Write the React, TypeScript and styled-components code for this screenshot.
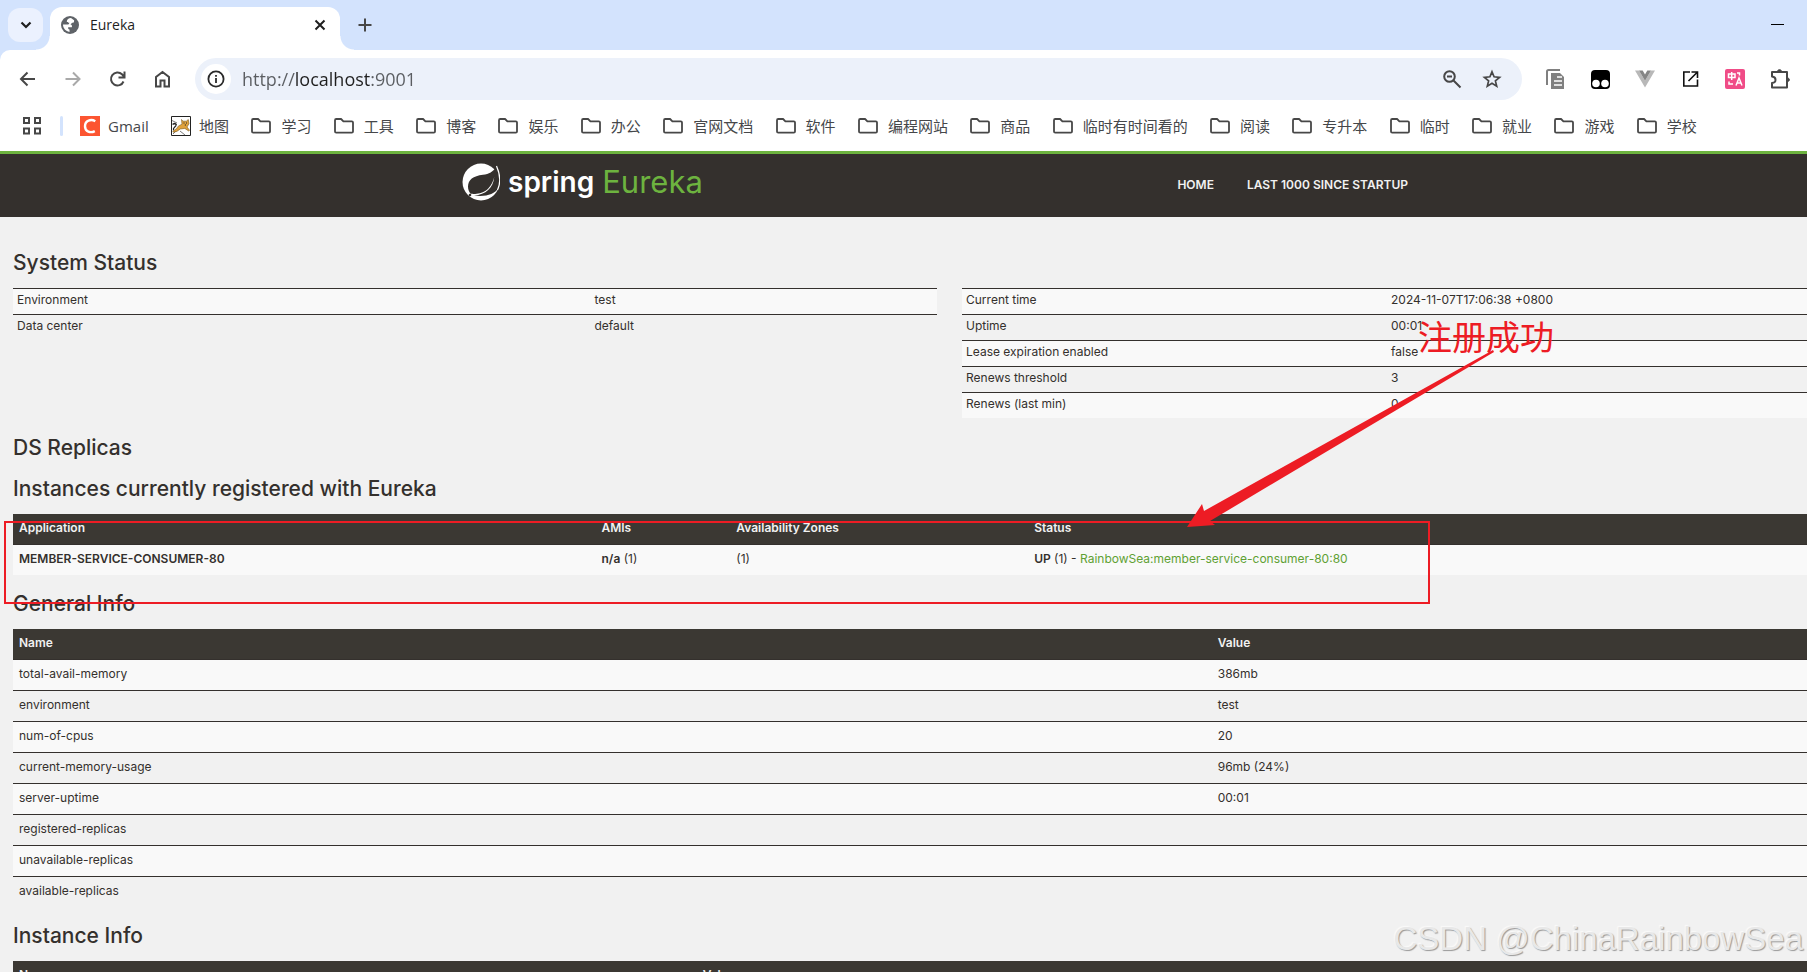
import React from "react";
import styled, { createGlobalStyle } from "styled-components";

const uiFont = '"Open Sans", "Noto Sans CJK SC", sans-serif';
const bodyFont = 'Inter, "Noto Sans CJK SC", sans-serif';
const ink = "#34302d";
const red = "#ed1c24";

const Global = createGlobalStyle`
  * { box-sizing: border-box; }
  html, body, #root { height: 100%; }
  body { margin: 0; background: #f1f1f1; font-family: ${bodyFont}; color: ${ink}; overflow: hidden; }
  button { border: 0; padding: 0; background: none; font: inherit; color: inherit; }
  a { color: inherit; text-decoration: none; }
  svg { display: block; }
`;

const Screen = styled.div`
  position: relative;
  height: 100%;
  overflow: hidden;
`;

const TabStrip = styled.header`
  display: flex;
  align-items: center;
  height: 50px;
  padding: 0 23px 0 8px;
  background: #d3e3fd;
  font-family: ${uiFont};
`;

const TabSearch = styled.button`
  display: grid;
  place-items: center;
  width: 35px;
  height: 34px;
  border-radius: 12px;
  background: #ebf1fe;
`;

const Tab = styled.div`
  position: relative;
  align-self: flex-end;
  display: flex;
  align-items: center;
  gap: 11px;
  width: 290px;
  height: 43px;
  margin-left: 7px;
  padding: 0 10px 8px 11px;
  border-radius: 12px 12px 0 0;
  background: #fff;
  font-size: 14px;
  color: #1f1f1f;
  &::before, &::after {
    content: "";
    position: absolute;
    bottom: 0;
    width: 14px;
    height: 14px;
  }
  &::before { left: -14px; background: radial-gradient(circle at 0 0, transparent 13px, #fff 14px); }
  &::after { right: -14px; background: radial-gradient(circle at 100% 0, transparent 13px, #fff 14px); }
`;

const TabTitle = styled.span`
  flex: 1;
`;

const NewTab = styled.button`
  margin-left: 15px;
`;

const Minimize = styled.button`
  margin-left: auto;
`;

const ToolbarBacking = styled.div`
  background: #d3e3fd;
`;

const Toolbar = styled.div`
  display: flex;
  align-items: center;
  padding: 8px 17px 0 18px;
  border-top-left-radius: 10px;
  background: #fff;
  font-family: ${uiFont};
`;

const IconGroup = styled.div`
  display: flex;
  gap: 25px;
`;

const IconButton = styled.button`
  display: grid;
  place-items: center;
  width: 20px;
  height: 20px;
`;

const Omnibox = styled.form`
  display: flex;
  align-items: center;
  flex: 1;
  height: 42px;
  margin: 0 23px 0 22px;
  padding: 0 20px 0 6px;
  border-radius: 21px;
  background: #ecf1fa;
`;

const SiteInfo = styled.button`
  display: grid;
  place-items: center;
  width: 30px;
  height: 30px;
  border-radius: 15px;
  background: #fff;
`;

/* The host name is darker than the scheme and the port on either side of it. */
const Address = styled.input`
  flex: 1;
  margin-left: 11px;
  padding: 0;
  border: 0;
  outline: 0;
  font-family: ${uiFont};
  font-size: 18px;
  line-height: 26px;
  color: transparent;
  caret-color: #1f1f1f;
  background: linear-gradient(90deg, #5a5d61 54px, #1f1f1f 54px 129px, #5a5d61 129px);
  background-clip: text;
`;

const OmniActions = styled.div`
  display: flex;
  gap: 20px;
`;

const Bookmarks = styled.nav`
  display: flex;
  align-items: center;
  height: 51px;
  padding: 0 16px 0 22px;
  background: #fff;
  font-family: ${uiFont};
  font-size: 15px;
  color: #45474a;
`;

const Divider = styled.span`
  width: 3px;
  height: 20px;
  margin: 0 17px 0 18px;
  border-radius: 2px;
  background: #d3e3fd;
`;

const BookmarkList = styled.div`
  display: flex;
  justify-content: space-between;
  flex: 1;
  max-width: 1617px;
`;

const Bookmark = styled.a<{ $folder?: boolean }>`
  display: flex;
  align-items: center;
  gap: ${(p) => (p.$folder ? 10 : 8)}px;
  line-height: 22px;
  white-space: nowrap;
`;

/* The Eureka page is wider than the window, so its right edge is cut off. */
const Page = styled.main`
  width: calc(100% + 92px);
`;

const NavBar = styled.div`
  height: 66px;
  border-top: 3px solid #6db33f;
  background: ${ink};
`;

const NavInner = styled.div`
  display: flex;
  align-items: center;
  width: 975px;
  height: 61px;
  margin: 0 auto;
`;

const Brand = styled.a`
  display: flex;
  align-items: center;
  margin-bottom: 6px;
  font-size: 28px;
  line-height: 36px;
`;

const BrandName = styled.span`
  margin-left: 8px;
  color: #fff;
  font-weight: 600;
`;

const BrandProduct = styled.span`
  margin-left: 8px;
  color: #6db33f;
  font-size: 31px;
`;

const NavLinks = styled.nav`
  display: flex;
  gap: 33px;
  margin-left: auto;
  padding-right: 29px;
  color: #f1f1f1;
  font-size: 12px;
  font-weight: 600;
`;

const Content = styled.div`
  padding: 30px 13px 0;
`;

const Heading = styled.h1`
  margin: 0;
  padding: 4px 0 13px;
  font-size: 21px;
  line-height: 24px;
  font-weight: 500;
`;

const StatusColumns = styled.div`
  display: grid;
  grid-template-columns: 1fr 1fr;
  align-items: start;
  gap: 25px;
  margin-bottom: 14px;
`;

const Table = styled.table<{ $compact?: boolean }>`
  width: 100%;
  table-layout: fixed;
  border-collapse: separate;
  border-spacing: 0;
  font-size: 12px;
  line-height: ${(p) => (p.$compact ? 17 : 20)}px;
  th, td {
    padding: ${(p) => (p.$compact ? "2px 4px 6px" : "4px 6px 6px")};
    text-align: left;
  }
  td { border-top: 1px solid ${ink}; }
  th { background: #3b3833; color: #f1f1f1; font-weight: 600; }
  b { font-weight: 600; }
  tbody tr:nth-child(odd) td { background: #f9f9f9; }
`;

const InfoTable = styled(Table)`
  margin-bottom: 13px;
`;

const InstanceLink = styled.a`
  color: #5fa134;
`;

const RedBox = styled.div`
  position: absolute;
  left: 4px;
  top: 521px;
  width: 1426px;
  height: 83px;
  border: 2px solid ${red};
  pointer-events: none;
`;

const ArrowLayer = styled.svg`
  position: absolute;
  left: 1187px;
  top: 350px;
  pointer-events: none;
`;

const Note = styled.div`
  position: absolute;
  left: 1418px;
  top: 316px;
  color: ${red};
  font-family: "Noto Sans CJK SC", sans-serif;
  font-size: 34px;
  line-height: 40px;
`;

const Watermark = styled.div`
  position: absolute;
  right: 4px;
  bottom: 13px;
  color: #e8e8e8;
  font-family: "Liberation Sans", sans-serif;
  font-size: 33px;
  line-height: 40px;
  text-shadow: 1px 1px 1px #999, -1px -1px 1px #fafafa;
`;

type Stroke = { d: string; size?: number; color?: string; width?: number };
const Line = ({ d, size = 20, color = "#474747", width = 2 }: Stroke) => (
  <svg width={size} height={size} viewBox="0 0 20 20" fill="none" stroke={color} strokeWidth={width} aria-hidden="true">
    <path d={d} />
  </svg>
);

const Globe = () => (
  <svg width="18" height="18" viewBox="0 0 18 18" aria-hidden="true">
    <circle cx="9" cy="9" r="9" fill="#5f6368" />
    <path d="M10 2C7.500 2.200 6 3.500 5.800 5.200c0 1.400 1.200 1.500 2.400 1.400.2 1.600-.4 2-2 2H2c0 3.800 2.800 6.800 6.500 7.300v-2.300c-1.200-.4-1.600-1.200-1.300-2.300l3.600-.1c.6-1.500 0-2.500-1.300-2.800l1.600-1.600h2V4.200Z" fill="#fff" />
    <path d="M13.800 4.500c1.500 1.500 2.100 3 2.100 4.600l-2.400-.2-1.500-1.500Z" fill="#5f6368" />
  </svg>
);

const Folder = () => (
  <svg width="20" height="16" viewBox="0 0 20 16" fill="none" stroke="#474747" strokeWidth="1.8" strokeLinejoin="round" aria-hidden="true">
    <path d="M1 13.500V2.200C1 1.500 1.500 1 2.200 1h4.900l2.300 2.300h8.400c.7 0 1.200.5 1.200 1.200v9c0 .7-.5 1.200-1.200 1.200H2.200C1.500 14.700 1 14.200 1 13.500Z" />
  </svg>
);

const CIcon = () => (
  <svg width="20" height="20" viewBox="0 0 20 20" aria-hidden="true">
    <path fill="#fc5531" d="M0 0h20v20H0z" />
    <path d="M15.300 5.200C11 2.700 5 4.400 5 10.300c0 5.600 5.500 7 9.800 4.800" fill="none" stroke="#fff" strokeWidth="2.4" />
  </svg>
);

const CatIcon = () => (
  <svg width="20" height="20" viewBox="0 0 20 20" aria-hidden="true">
    <path fill="#fff" stroke="#222" d="M.5.500h19v19H.5z" />
    <path d="M1 4.500 6 7M1 8l5 .5M9 15l5 4M2 18l4-4" stroke="#555" strokeWidth=".8" />
    <path d="m10.500 3.500 1.500 1.700h3.300l2-1.700.7 4.300-2 3.200 2.500 3.200-.7.9-4-2.700-4.500.6-3.500 2.400-3.500.8-.5-1 3.500-2.300 2.200-3 3.500-1.700Z" fill="#e0a23c" stroke="#7a5a24" strokeWidth=".6" />
    <path d="M2 8.500c1.500-2 3.500-1 3 .8s-3.500 2.500-2.500 5" fill="none" stroke="#222" strokeWidth="1.2" />
    <path d="M12.500 7h1M15 7h1M13.800 9h1.200" stroke="#222" />
  </svg>
);

const AppsIcon = () => (
  <svg width="20" height="20" viewBox="0 0 20 20" fill="none" stroke="#474747" strokeWidth="2" aria-hidden="true">
    <path d="M2 2h5v5H2zM13 2h5v5h-5zM2 12.500h5v5H2zM13 12.500h5v5h-5z" />
  </svg>
);

const PagesIcon = () => (
  <svg width="20" height="20" viewBox="0 0 20 20" aria-hidden="true">
    <path d="M2 16V2.500C2 1.500 2.500 1 3.500 1H15" fill="none" stroke="#808080" strokeWidth="2" />
    <path d="M6 4h9l4 4v12H6z" fill="#808080" />
    <path d="M12 8h5M9 12h8M9 16h8" stroke="#fff" strokeWidth="1.5" />
  </svg>
);

const MaskIcon = () => (
  <svg width="20" height="20" viewBox="0 0 20 20" aria-hidden="true">
    <rect x="1" y="1" width="19" height="19" rx="4" fill="#000" />
    <circle cx="6" cy="14.500" r="3.800" fill="#fff" />
    <circle cx="15" cy="14.500" r="3.800" fill="#fff" />
  </svg>
);

const VueIcon = () => (
  <svg width="20" height="20" viewBox="0 0 20 20" aria-hidden="true">
    <path d="M0 1.500h4l6 10.300 6-10.300h4L10 18.500Z" fill="#b8b8b8" />
    <path d="M4 1.500h3.700L10 5.500l2.300-4H16L10 11.800Z" fill="#858585" />
  </svg>
);

const OpenIcon = () => (
  <svg width="20" height="20" viewBox="0 0 20 20" fill="none" stroke="#111" strokeWidth="1.6" aria-hidden="true">
    <path d="M10 3H3.800v14H17.500v-6.500M11.500 3h6v6M17.500 3 8.500 12" />
  </svg>
);

const TranslateIcon = () => (
  <svg width="20" height="20" viewBox="0 0 20 20" fill="none" stroke="#fff" strokeWidth="1.5" aria-hidden="true">
    <rect width="20" height="20" rx="2" fill="#f04c87" stroke="none" />
    <path d="M3.500 5h6.500v3.500H3.500ZM6.700 3v8M12 4h2.500v2.500M4 12.500v2.500h4M11 16.500l3-7.500 3 7.500M12 14h4" />
  </svg>
);

const PuzzleIcon = () => (
  <svg width="20" height="20" viewBox="0 0 20 20" fill="none" stroke="#474747" strokeWidth="2" strokeLinejoin="round" aria-hidden="true">
    <path d="M2 3h15v15.500H2v-4.500c3-.3 3.500-1.200 3.500-3.200S5 7.800 2 7.500Z" />
    <path d="M7.500 2.500c0-2.500 4-2.500 4 0ZM17.500 9c2.500 0 2.500 3.500 0 3.500Z" fill="#474747" strokeWidth="1" />
  </svg>
);

const SpringLeaf = () => (
  <svg width="38" height="38" viewBox="0 0 38 38" aria-hidden="true">
    <circle cx="19" cy="19" r="18.500" fill="#fff" />
    <path d="M34.500 3.500C31 9 27 11 21 11.800 11 13 6 17 6 23.500c0 3 1 5.500 2.600 7.300 9.400.7 19.400-1.300 23.700-16.800-1.300 11-8.300 17.800-20.300 18.500 11.500 1.500 20.500-1 24.400-7.500 2-7 1.200-14-1.900-21.500Z" fill="#34302d" />
    <path d="M34.500 3C38.500 12 38.800 20 35.500 27" fill="none" stroke="#fff" strokeWidth="1.2" />
    <circle cx="8" cy="32" r="1.300" fill="#34302d" />
  </svg>
);

const folders = ["学习", "工具", "博客", "娱乐", "办公", "官网文档", "软件", "编程网站", "商品", "临时有时间看的", "阅读", "专升本", "临时", "就业", "游戏", "学校"];

const extensions: [string, React.ReactNode][] = [
  ["Copy pages", <PagesIcon />],
  ["Scripts", <MaskIcon />],
  ["Vue", <VueIcon />],
  ["Open", <OpenIcon />],
  ["Translate", <TranslateIcon />],
  ["Extensions", <PuzzleIcon />],
];

const environment = [["Environment", "test"], ["Data center", "default"]];
const runtime = [
  ["Current time", "2024-11-07T17:06:38 +0800"],
  ["Uptime", "00:01"],
  ["Lease expiration enabled", "false"],
  ["Renews threshold", "3"],
  ["Renews (last min)", "0"],
];
const general = [
  ["total-avail-memory", "386mb"],
  ["environment", "test"],
  ["num-of-cpus", "20"],
  ["current-memory-usage", "96mb (24%)"],
  ["server-uptime", "00:01"],
  ["registered-replicas", ""],
  ["unavailable-replicas", ""],
  ["available-replicas", ""],
];

const Rows = ({ rows }: { rows: string[][] }) => (
  <tbody>
    {rows.map(([name, value]) => (
      <tr key={name}>
        <td>{name}</td>
        <td>{value}</td>
      </tr>
    ))}
  </tbody>
);

const Columns = ({ widths }: { widths: string[] }) => (
  <colgroup>
    {widths.map((w, i) => (
      <col key={i} width={w} />
    ))}
  </colgroup>
);

const NameValueHead = () => (
  <thead>
    <tr>
      <th>Name</th>
      <th>Value</th>
    </tr>
  </thead>
);

export default function App() {
  return (
    <Screen>
      <Global />
      <TabStrip>
        <TabSearch aria-label="Search tabs">
          <Line d="m5.500 7.500 4.500 4.500 4.500-4.500" color="#1f1f1f" width={2.2} />
        </TabSearch>
        <Tab>
          <Globe />
          <TabTitle>Eureka</TabTitle>
          <IconButton aria-label="Close tab">
            <Line d="m5.500 5.500 9 9m0-9-9 9" color="#1f1f1f" />
          </IconButton>
        </Tab>
        <NewTab aria-label="New tab">
          <Line d="M10 3.500v13M3.500 10h13" />
        </NewTab>
        <Minimize aria-label="Minimize">
          <svg width="13" height="2" aria-hidden="true"><path d="M0 .500h13" stroke="#000" /></svg>
        </Minimize>
      </TabStrip>
      <ToolbarBacking>
        <Toolbar>
          <IconGroup>
            <IconButton aria-label="Back"><Line d="M17 10H4M9.500 3.500 3 10l6.500 6.500" /></IconButton>
            <IconButton aria-label="Forward"><Line d="M2.500 10H16M10 3.500 16.500 10 10 16.500" color="#a9a9a9" /></IconButton>
            <IconButton aria-label="Reload"><Line d="M15.500 12.500A6.500 6.500 0 1 1 14 5.300L16 7.500M16.500 2.500v6h-6" /></IconButton>
            <IconButton aria-label="Home"><Line d="M3 17.500V8l6.500-5L16 8v9.500h-4.500v-6h-4v6Z" /></IconButton>
          </IconGroup>
          <Omnibox>
            <SiteInfo type="button" aria-label="Site information">
              <svg width="18" height="18" viewBox="0 0 18 18" fill="none" stroke="#2a2a2a" strokeWidth="1.8" aria-hidden="true">
                <circle cx="9" cy="9" r="7.600" /><path d="M9 8v5M9 5v1.800" />
              </svg>
            </SiteInfo>
            <Address aria-label="Address" defaultValue="http://localhost:9001" />
            <OmniActions>
              <IconButton type="button" aria-label="Zoom">
                <svg width="20" height="20" viewBox="0 0 20 20" fill="none" stroke="#474747" strokeWidth="2" aria-hidden="true">
                  <circle cx="7.500" cy="7.500" r="5.300" /><path d="m11.500 11.500 7 7M5 7.500h5" />
                </svg>
              </IconButton>
              <IconButton type="button" aria-label="Bookmark this page">
                <Line width={1.7} d="m10 2.800 2.100 5 5.500.5-4.200 3.600 1.300 5.300-4.700-2.900-4.700 2.900 1.300-5.300-4.200-3.600 5.500-.5Z" />
              </IconButton>
            </OmniActions>
          </Omnibox>
          <IconGroup>
            {extensions.map(([label, icon]) => (
              <IconButton key={label} aria-label={label}>{icon}</IconButton>
            ))}
          </IconGroup>
        </Toolbar>
      </ToolbarBacking>
      <Bookmarks aria-label="Bookmarks">
        <IconButton aria-label="Apps"><AppsIcon /></IconButton>
        <Divider />
        <BookmarkList>
          <Bookmark href="#gmail"><CIcon />Gmail</Bookmark>
          <Bookmark href="#map"><CatIcon />地图</Bookmark>
          {folders.map((name) => (
            <Bookmark key={name} href={`#${name}`} $folder><Folder />{name}</Bookmark>
          ))}
        </BookmarkList>
      </Bookmarks>

      <Page>
        <NavBar>
          <NavInner>
            <Brand href="#home">
              <SpringLeaf />
              <BrandName>spring</BrandName>
              <BrandProduct>Eureka</BrandProduct>
            </Brand>
            <NavLinks>
              <a href="#home">HOME</a>
              <a href="#lastn">LAST 1000 SINCE STARTUP</a>
            </NavLinks>
          </NavInner>
        </NavBar>
        <Content>
          <Heading>System Status</Heading>
          <StatusColumns>
            <Table $compact>
              <Columns widths={["62.5%", "37.5%"]} />
              <Rows rows={environment} />
            </Table>
            <Table $compact>
              <Columns widths={["46%", "54%"]} />
              <Rows rows={runtime} />
            </Table>
          </StatusColumns>
          <Heading>DS Replicas</Heading>
          <Heading>Instances currently registered with Eureka</Heading>
          <InfoTable>
            <Columns widths={["31.1%", "7.2%", "15.9%", "45.8%"]} />
            <thead>
              <tr>
                <th>Application</th>
                <th>AMIs</th>
                <th>Availability Zones</th>
                <th>Status</th>
              </tr>
            </thead>
            <tbody>
              <tr>
                <td><b>MEMBER-SERVICE-CONSUMER-80</b></td>
                <td><b>n/a</b> (1)</td>
                <td>(1)</td>
                <td><b>UP</b> (1) - <InstanceLink href="#instance">RainbowSea:member-service-consumer-80:80</InstanceLink></td>
              </tr>
            </tbody>
          </InfoTable>
          <Heading>General Info</Heading>
          <InfoTable>
            <Columns widths={["64%", "36%"]} />
            <NameValueHead />
            <Rows rows={general} />
          </InfoTable>
          <Heading>Instance Info</Heading>
          <InfoTable>
            <Columns widths={["36.5%", "63.5%"]} />
            <NameValueHead />
          </InfoTable>
        </Content>
      </Page>

      <RedBox />
      <ArrowLayer width="308" height="178" viewBox="0 0 308 178" aria-hidden="true">
        <path d="M0 177 15 154l2 7L306 0l1 2L23 171l5 4Z" fill={red} />
      </ArrowLayer>
      <Note>注册成功</Note>
      <Watermark>CSDN @ChinaRainbowSea</Watermark>
    </Screen>
  );
}
